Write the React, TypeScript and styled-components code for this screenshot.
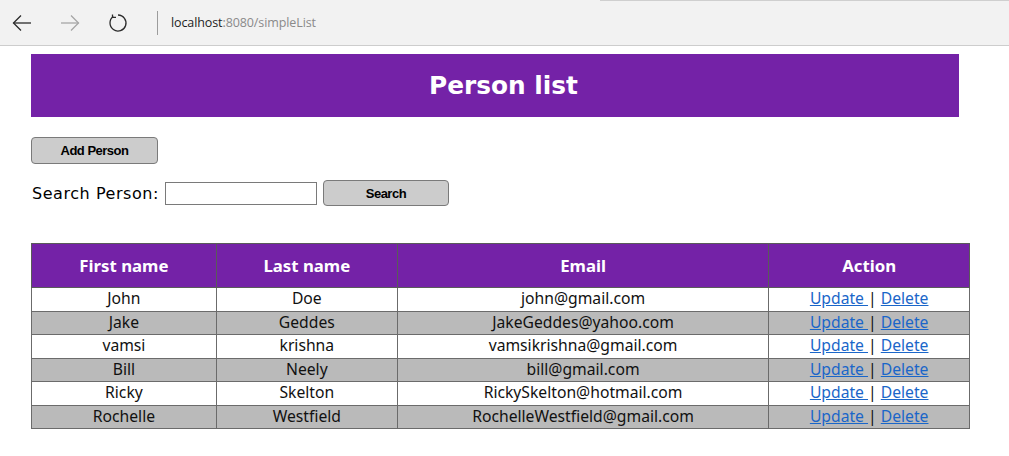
import React from "react";
import styled, { createGlobalStyle } from "styled-components";

const GlobalStyle = createGlobalStyle`
  html, body { margin: 0; padding: 0; background: #ffffff; }
  body { font-family: "Noto Sans", "DejaVu Sans", sans-serif; }
`;

const BrowserBar = styled.div`
  height: 45px;
  display: flex;
  align-items: center;
  background: linear-gradient(#cfcfcf, #cfcfcf) 600px 0 / 100% 1px no-repeat, #f2f2f2;
  border-bottom: 1px solid #cdcdcd;
  padding-left: 10px;
`;

const NavButton = styled.div<{ $dim?: boolean }>`
  width: 24px;
  height: 24px;
  margin-right: 24px;
  display: flex;
  align-items: center;
  justify-content: center;
  color: ${(p) => (p.$dim ? "#a6a6a6" : "#2b2b2b")};
`;

const Separator = styled.div`
  width: 1px;
  height: 24px;
  background: #9c9c9c;
  margin-left: 3px;
  margin-right: 13px;
`;

const Url = styled.div`
  font-family: "Open Sans", "Noto Sans", sans-serif;
  font-size: 12.5px;
  color: #8a8a8a;
  letter-spacing: -0.1px;
`;

const Host = styled.span`
  color: #1e1e1e;
`;

const Page = styled.div`
  padding: 8px 0 0 31px;
`;

const Banner = styled.h1`
  margin: 0;
  width: 928px;
  height: 63px;
  box-sizing: border-box;
  padding-left: 17px;
  background: #7422a7;
  color: #ffffff;
  display: flex;
  align-items: center;
  justify-content: center;
  font-family: "DejaVu Sans", sans-serif;
  font-weight: bold;
  font-size: 24.8px;
`;

const GrayButton = styled.button<{ $w: number; $h: number }>`
  width: ${(p) => p.$w}px;
  height: ${(p) => p.$h}px;
  background: #cccccc;
  border: 1px solid #7a7a7a;
  border-radius: 4px;
  font-family: "Liberation Sans", Arial, sans-serif;
  font-weight: bold;
  font-size: 13px;
  letter-spacing: -0.5px;
  color: #000;
  padding: 0;
`;

const AddRow = styled.div`
  margin-top: 20px;
  display: flex;
`;

const SearchRow = styled.div`
  margin-top: 16px;
  display: flex;
  align-items: center;
`;

const Label = styled.label`
  font-family: "DejaVu Sans", sans-serif;
  font-size: 16px;
  letter-spacing: 0.55px;
  color: #000;
  margin-right: 6px;
  margin-left: 1px;
`;

const SearchInput = styled.input`
  width: 152px;
  height: 23px;
  box-sizing: border-box;
  border: 1px solid #7a7a7a;
  margin: 0 6px 0 0;
`;

const Table = styled.table`
  margin-top: 37px;
  border-collapse: collapse;
  width: 939px;
  border: 1px solid #6b6b6b;
  font-family: "Noto Sans", sans-serif;
  font-size: 15.7px;
`;

const Th = styled.th<{ $w: number }>`
  width: ${(p) => p.$w}px;
  height: 42px;
  padding: 0;
  background: #7422a7;
  color: #ffffff;
  border: 1px solid #5a5a5a;
  font-weight: bold;
  font-size: 16.8px;
  line-height: 1;
  vertical-align: middle;
  padding-top: 1px;
`;

const Tr = styled.tr<{ $alt: boolean }>`
  background: ${(p) => (p.$alt ? "#bababa" : "#ffffff")};
`;

const Td = styled.td`
  height: 22.5px;
  padding: 0;
  border: 1px solid #6b6b6b;
  text-align: center;
  color: #111;
  line-height: 1;
  vertical-align: middle;
`;

const Link = styled.a`
  color: #1a66c9;
  text-decoration: underline;
  cursor: pointer;
`;

const people = [
  ["John", "Doe", "john@gmail.com"],
  ["Jake", "Geddes", "JakeGeddes@yahoo.com"],
  ["vamsi", "krishna", "vamsikrishna@gmail.com"],
  ["Bill", "Neely", "bill@gmail.com"],
  ["Ricky", "Skelton", "RickySkelton@hotmail.com"],
  ["Rochelle", "Westfield", "RochelleWestfield@gmail.com"],
];

const ArrowIcon = ({ dir }: { dir: "left" | "right" }) => (
  <svg width="22" height="22" viewBox="0 0 22 22" fill="none" stroke="currentColor" strokeWidth="1.3">
    {dir === "left" ? (
      <>
        <path d="M20 11H2.5" />
        <path d="M10 3.5L2.5 11L10 18.5" />
      </>
    ) : (
      <>
        <path d="M2 11H19.5" />
        <path d="M12 3.5L19.5 11L12 18.5" />
      </>
    )}
  </svg>
);

const RefreshIcon = () => (
  <svg width="22" height="22" viewBox="0 0 22 22" fill="none" stroke="currentColor" strokeWidth="1.3">
    <path d="M6.2 4.6A8 8 0 1 0 11 3" />
    <path d="M5.5 2.5V5.3H9" />
  </svg>
);

export default function App() {
  return (
    <>
      <GlobalStyle />
      <BrowserBar>
        <NavButton>
          <ArrowIcon dir="left" />
        </NavButton>
        <NavButton $dim>
          <ArrowIcon dir="right" />
        </NavButton>
        <NavButton>
          <RefreshIcon />
        </NavButton>
        <Separator />
        <Url>
          <Host>localhost</Host>:8080/simpleList
        </Url>
      </BrowserBar>
      <Page>
        <Banner>Person list</Banner>
        <AddRow>
          <GrayButton $w={127} $h={27}>Add Person</GrayButton>
        </AddRow>
        <SearchRow>
          <Label>Search Person:</Label>
          <SearchInput type="text" />
          <GrayButton $w={126} $h={26}>Search</GrayButton>
        </SearchRow>
        <Table>
          <thead>
            <tr>
              <Th $w={185}>First name</Th>
              <Th $w={181}>Last name</Th>
              <Th $w={372}>Email</Th>
              <Th $w={201}>Action</Th>
            </tr>
          </thead>
          <tbody>
            {people.map((p, i) => (
              <Tr key={p[2]} $alt={i % 2 === 1}>
                <Td>{p[0]}</Td>
                <Td>{p[1]}</Td>
                <Td>{p[2]}</Td>
                <Td>
                  <Link>Update </Link>| <Link>Delete</Link>
                </Td>
              </Tr>
            ))}
          </tbody>
        </Table>
      </Page>
    </>
  );
}
